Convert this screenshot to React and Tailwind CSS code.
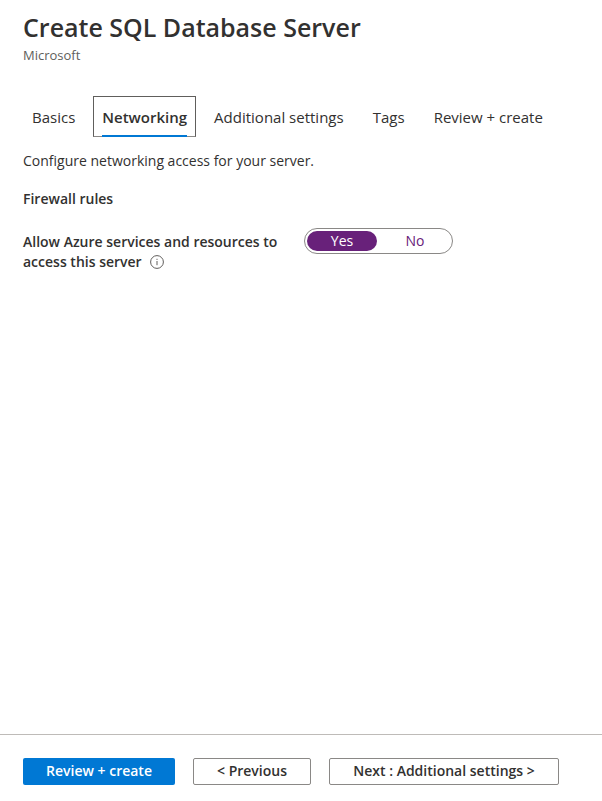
import { useState } from "react";

const tabs = ["Basics", "Networking", "Additional settings", "Tags", "Review + create"];

function Tab({ label, selected, onSelect }) {
  return (
    <button
      type="button"
      role="tab"
      aria-selected={selected}
      onClick={onSelect}
      className={
        "flex h-[41px] min-w-[54px] flex-col items-center border px-2 whitespace-nowrap outline-none " +
        (selected ? "border-[#605e5c] border-b-[#8a8886] font-semibold" : "border-transparent")
      }
    >
      <span className={"flex h-10 shrink-0 items-center border-b-2 pt-1 " + (selected ? "border-[#0078d4]" : "border-transparent")}>
        {label}
      </span>
    </button>
  );
}

function InfoIcon() {
  return (
    <svg viewBox="0 0 14 14" className="size-3.5" fill="none" stroke="#605e5c" aria-hidden="true">
      <circle cx="7" cy="7" r="6.4" strokeWidth="1" />
      <path d="M7 6v4.2M7 3.8v1.1" strokeWidth="1" />
    </svg>
  );
}

export default function App() {
  const [active, setActive] = useState("Networking");
  const [allow, setAllow] = useState("Yes");

  return (
    <div className="flex min-h-screen flex-col bg-white font-['Open_Sans','Noto_Sans',sans-serif] text-sm text-[#323130]">
      <header className="px-[23px] pt-[9px]">
        <h1 className="text-[25px] leading-9 font-semibold">Create SQL Database Server</h1>
        <p className="pt-px text-[13px] leading-[18px] text-[#605e5c]">Microsoft</p>
      </header>

      <main className="grow px-[23px] pt-8">
        <div role="tablist" className="flex gap-[9px] text-[15px]">
          {tabs.map((label) => (
            <Tab key={label} label={label} selected={label === active} onSelect={() => setActive(label)} />
          ))}
        </div>

        <p className="mt-3.5 leading-5">Configure networking access for your server.</p>
        <h2 className="mt-[18px] leading-5 font-semibold">Firewall rules</h2>

        <div className="mt-[19px] flex gap-[21px]">
          <div id="allow-label" className="w-[260px] pt-1 leading-5 font-semibold">
            Allow Azure services and resources to access this server
            <button type="button" aria-label="More information" className="ml-2 align-[-2px]">
              <InfoIcon />
            </button>
          </div>
          <div
            role="radiogroup"
            aria-labelledby="allow-label"
            className="flex h-[26px] w-[149px] gap-[3px] rounded-full border border-[#8a8886] p-0.5"
          >
            {["Yes", "No"].map((option) => (
              <label
                key={option}
                className="relative flex flex-1 cursor-pointer items-center justify-center rounded-full text-[#68217a] has-checked:bg-[#68217a] has-checked:text-white"
              >
                <input
                  type="radio"
                  name="allow-azure"
                  value={option}
                  checked={allow === option}
                  onChange={() => setAllow(option)}
                  className="sr-only"
                />
                {option}
              </label>
            ))}
          </div>
        </div>
      </main>

      <footer className="flex gap-[18px] border-t border-[#bebbb8] px-[23px] pt-[23px] pb-4 font-semibold whitespace-nowrap">
        <button type="button" className="h-[27px] w-[152px] rounded-xs bg-[#0078d4] pb-0.5 text-white">
          Review + create
        </button>
        <button type="button" className="h-[27px] w-[118px] rounded-xs border border-[#8a8886] pb-0.5">
          &lt; Previous
        </button>
        <button type="button" className="h-[27px] w-[230px] rounded-xs border border-[#8a8886] pb-0.5">
          Next : Additional settings &gt;
        </button>
      </footer>
    </div>
  );
}
